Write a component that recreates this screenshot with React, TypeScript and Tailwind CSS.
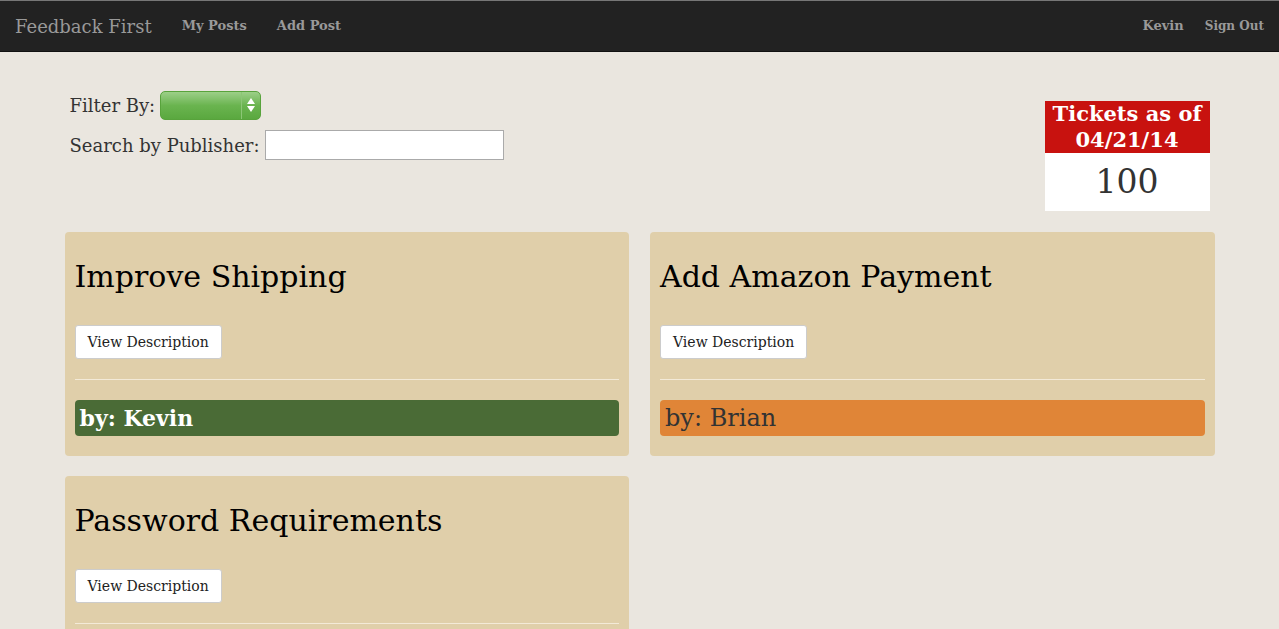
const serif = { fontFamily: '"DejaVu Serif", "Liberation Serif", serif' }

const posts = [
  { title: 'Improve Shipping', author: 'Kevin', tone: 'green' },
  { title: 'Add Amazon Payment', author: 'Brian', tone: 'orange' },
  { title: 'Password Requirements', author: '', tone: 'none' },
]

function Navbar() {
  return (
    <div className="flex h-[52px] items-center justify-between border-t border-t-[#777] border-b border-b-[#111] bg-[#222] px-[15px] text-[#999]">
      <div className="flex items-center">
        <span className="text-[18px]">Feedback First</span>
        <span className="ml-[30px] text-[13px] font-bold">My Posts</span>
        <span className="ml-[30px] text-[13px] font-bold">Add Post</span>
      </div>
      <div className="flex items-center">
        <span className="text-[13px] font-bold">Kevin</span>
        <span className="ml-[21px] text-[12px] font-bold">Sign Out</span>
      </div>
    </div>
  )
}

function GreenSelect() {
  return (
    <div className="relative ml-[5px] h-[29px] w-[101px] rounded-[5px] border border-[#58a33c] bg-gradient-to-b from-[#9ccf88] via-[#6ab44f] to-[#5aa83f]">
      <div className="absolute right-[18px] top-0 h-full w-px bg-[#8cc676]" />
      <div className="absolute right-[5px] top-[6px] flex flex-col items-center gap-[2px]">
        <div className="h-0 w-0 border-x-[4px] border-b-[6px] border-x-transparent border-b-white" />
        <div className="h-0 w-0 border-x-[4px] border-t-[6px] border-x-transparent border-t-white" />
      </div>
    </div>
  )
}

function TicketBox() {
  return (
    <div className="mt-[10px] w-[165px]">
      <div className="h-[52px] bg-[#c8120f] text-center text-[21px] font-bold leading-[26px] text-white">
        Tickets as of
        <br />
        04/21/14
      </div>
      <div className="flex h-[58px] items-center justify-center bg-white text-[33px] text-[#333]">100</div>
    </div>
  )
}

function PostCard({ title, author, tone }: { title: string; author: string; tone: string }) {
  return (
    <div className="rounded-[4px] bg-[#e0cfaa] px-[10px] pb-[20px]">
      <h2 className="pt-[27px] text-[30px] leading-[36px] text-black">{title}</h2>
      <button
        type="button"
        className="mt-[30px] h-[34px] rounded-[3px] border border-[#ccc] bg-white px-[12px] text-[14px] text-[#222]"
      >
        View Description
      </button>
      <div className="mt-[20px] border-t border-[#f3ead8]" />
      {tone === 'green' && (
        <div className="mt-[20px] flex h-[36px] items-center rounded-[4px] bg-[#4a6b36] px-[5px] text-[22px] font-bold text-white">
          by: {author}
        </div>
      )}
      {tone === 'orange' && (
        <div className="mt-[20px] flex h-[36px] items-center rounded-[4px] bg-[#e08537] px-[5px] text-[24px] text-[#333]">
          by: {author}
        </div>
      )}
    </div>
  )
}

export default function App() {
  return (
    <div className="min-h-[629px] bg-[#eae6df]" style={serif}>
      <Navbar />
      <div className="mx-auto w-[1150px]">
        <div className="flex justify-between px-[5px] pt-[39px]">
          <div className="text-[18px] text-[#333]">
            <div className="flex items-center">
              <span>Filter By:</span>
              <GreenSelect />
            </div>
            <div className="mt-[10px] flex items-center">
              <span>Search by Publisher:</span>
              <input className="ml-[5px] h-[30px] w-[239px] border border-[#aaa] bg-white" />
            </div>
          </div>
          <TicketBox />
        </div>
        <div className="mt-[21px] grid grid-cols-2 gap-x-[21px] gap-y-[20px]">
          {posts.map((p) => (
            <PostCard key={p.title} title={p.title} author={p.author} tone={p.tone} />
          ))}
        </div>
      </div>
    </div>
  )
}
